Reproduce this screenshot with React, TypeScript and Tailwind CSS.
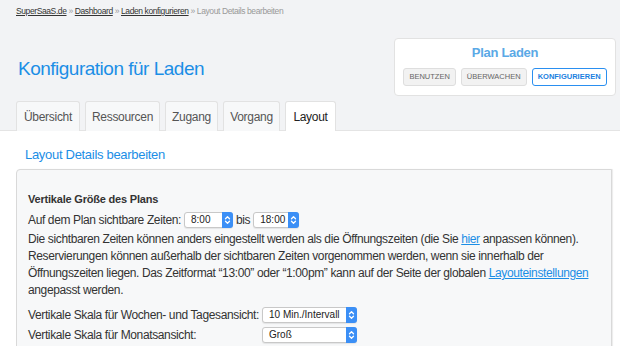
import React from "react";

function Select({ value, width }: { value: string; width: string }) {
  return (
    <span
      className={`inline-flex items-stretch align-middle h-[16px] rounded-[3px] border border-[#c8c8c8] bg-white shadow-[0_1px_1px_rgba(0,0,0,0.08)] tracking-normal ${width}`}
    >
      <span className="flex-1 pl-[6px] text-[10px] leading-[14px] text-[#222]">{value}</span>
      <span className="w-[11px] -my-px -mr-px rounded-r-[3px] bg-[#3b8ff6] flex items-center justify-center">
        <svg width="7" height="10" viewBox="0 0 7 10" fill="none" stroke="white" strokeWidth="1.3" strokeLinecap="round" strokeLinejoin="round">
          <path d="M1.5 3.8 L3.5 1.8 L5.5 3.8" />
          <path d="M1.5 6.2 L3.5 8.2 L5.5 6.2" />
        </svg>
      </span>
    </span>
  );
}

const tabs = [
  { label: "Übersicht", w: "w-[64px]" },
  { label: "Ressourcen", w: "w-[75px]" },
  { label: "Zugang", w: "w-[53px]" },
  { label: "Vorgang", w: "w-[57px]" },
  { label: "Layout", w: "w-[51px]" },
];

export default function App() {
  return (
    <div className="w-[620px] h-[346px] overflow-hidden bg-white text-[#333] font-['Liberation_Sans',Arial,sans-serif]">
      <div className="bg-[#f2f3f5] border-b border-[#e4e4e4]">
        <div className="px-[16px] pt-[5px] text-[8.5px] leading-[12px] tracking-[-0.4px] text-[#999]">
          <a className="text-[#333] underline">SuperSaaS.de</a>
          <span> » </span>
          <a className="text-[#333] underline">Dashboard</a>
          <span> » </span>
          <a className="text-[#333] underline">Laden konfigurieren</a>
          <span> » Layout Details bearbeiten</span>
        </div>
        <div className="flex items-center justify-between pl-[18px] pr-[4px] mt-[21px]">
          <h1 className="text-[19px] leading-[24px] tracking-[-0.5px] text-[#1b8ee6] mt-[4px]">Konfiguration für Laden</h1>
          <div className="w-[222px] h-[58px] rounded-[4px] border border-[#e2e2e2] bg-white flex flex-col items-center">
            <div className="mt-[6px] text-[13px] leading-[16px] font-bold tracking-[-0.3px] text-[#5aa9e6]">Plan Laden</div>
            <div className="flex gap-[5px] mt-[7px] text-[7.5px] leading-[16px]">
              <span className="px-[5px] h-[18px] border border-[#dedede] rounded-[3px] bg-[#f2f2f2] text-[#666] flex items-center">BENUTZEN</span>
              <span className="px-[5px] h-[18px] border border-[#dedede] rounded-[3px] bg-[#f2f2f2] text-[#666] flex items-center">ÜBERWACHEN</span>
              <span className="px-[5px] h-[18px] border border-[#2a8ff0] rounded-[3px] bg-white text-[#1a7fe0] font-bold flex items-center">KONFIGURIEREN</span>
            </div>
          </div>
        </div>
        <div className="flex gap-[5px] px-[16px] mt-[5px] -mb-px">
          {tabs.map((t) => (
            <div
              key={t.label}
              className={`${t.w} h-[30px] flex items-center justify-center text-[12px] tracking-[-0.3px] rounded-t-[3px] border border-b-0 border-[#e2e2e2] ${
                t.label === "Layout" ? "bg-white text-[#222]" : "bg-[#f7f8f9] text-[#555]"
              }`}
            >
              {t.label}
            </div>
          ))}
        </div>
      </div>
      <div className="pl-[16px] pr-[8px]">
        <h2 className="pl-[9px] pt-[15px] text-[13px] leading-[18px] tracking-[-0.3px] text-[#1b8ee6]">Layout Details bearbeiten</h2>
        <div className="mt-[5px] rounded-tl-[4px] border border-[#d9d9d9] bg-[#f7f8f9] shadow-[1px_0_1px_rgba(0,0,0,0.08)] px-[11px] pt-[22px] pb-[20px] text-[12px] leading-[17px] tracking-[-0.37px]">
          <div className="font-bold text-[11px] leading-[14px] tracking-[-0.2px] text-[#333]">Vertikale Größe des Plans</div>
          <div className="mt-[5px] flex items-center gap-[3px] h-[18px]">
            <span>Auf dem Plan sichtbare Zeiten:</span>
            <Select value="8:00" width="w-[49px]" />
            <span>bis</span>
            <Select value="18:00" width="w-[46px]" />
          </div>
          <p className="mt-[2px]">
            Die sichtbaren Zeiten können anders eingestellt werden als die Öffnungszeiten (die Sie{" "}
            <a className="text-[#1b8ee6] underline">hier</a> anpassen können).
            <br />
            Reservierungen können außerhalb der sichtbaren Zeiten vorgenommen werden, wenn sie innerhalb der
            <br />
            Öffnungszeiten liegen. Das Zeitformat “13:00” oder “1:00pm” kann auf der Seite der globalen{" "}
            <a className="text-[#1b8ee6] underline">Layouteinstellungen</a>
            <br />
            angepasst werden.
          </p>
          <div className="mt-[6px] flex items-center h-[20px]">
            <span className="w-[234px] whitespace-nowrap">Vertikale Skala für Wochen- und Tagesansicht:</span>
            <Select value="10 Min./Intervall" width="w-[95px]" />
          </div>
          <div className="flex items-center h-[20px]">
            <span className="w-[234px] whitespace-nowrap">Vertikale Skala für Monatsansicht:</span>
            <Select value="Groß" width="w-[95px]" />
          </div>
        </div>
      </div>
    </div>
  );
}
